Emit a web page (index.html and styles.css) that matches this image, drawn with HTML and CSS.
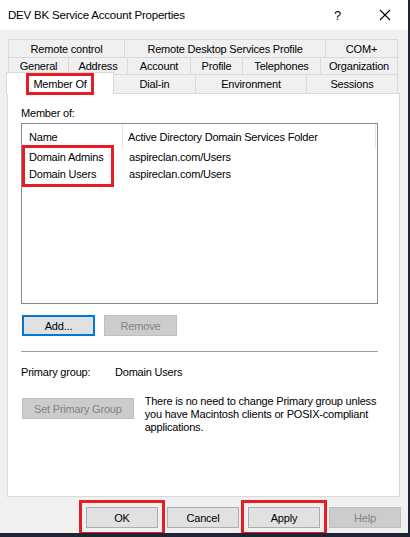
FILE: index.html
```html
<!DOCTYPE html>
<html lang="en">
<head>
  <meta charset="UTF-8">
  <title>DEV BK Service Account Properties</title>
  <link rel="stylesheet" href="styles.css">
</head>
<body>
  <div class="window">
    <div class="titlebar">
      <span class="title">DEV BK Service Account Properties</span>
      <span class="help-btn">?</span>
      <span class="close-btn">
        <svg width="12" height="12" viewBox="0 0 12 12">
          <path d="M1 1 L11 11 M11 1 L1 11" stroke="#000" stroke-width="1.1" fill="none"/>
        </svg>
      </span>
    </div>

    <div class="tabs">
      <div class="tab-row">
        <div class="tab" style="width:116px">Remote control</div>
        <div class="tab" style="width:201px">Remote Desktop Services Profile</div>
        <div class="tab last" style="width:73px">COM+</div>
      </div>
      <div class="tab-row">
        <div class="tab" style="width:60px">General</div>
        <div class="tab" style="width:59px">Address</div>
        <div class="tab" style="width:63px">Account</div>
        <div class="tab" style="width:52px">Profile</div>
        <div class="tab" style="width:78px">Telephones</div>
        <div class="tab last" style="width:78px">Organization</div>
      </div>
      <div class="tab-row front">
        <div class="tab active" style="width:108px"><span class="mark">Member Of</span></div>
        <div class="tab" style="width:81px">Dial-in</div>
        <div class="tab" style="width:111px">Environment</div>
        <div class="tab last" style="width:92px">Sessions</div>
      </div>
    </div>

    <div class="panel">
      <div class="label">Member of:</div>
      <div class="listview">
        <div class="lv-header">
          <div class="lv-col name-col">Name</div>
          <div class="lv-col folder-col">Active Directory Domain Services Folder</div>
        </div>
        <div class="lv-body">
          <div class="names">
            <div class="mark-box">
              <div class="lv-cell">Domain Admins</div>
              <div class="lv-cell">Domain Users</div>
            </div>
          </div>
          <div class="folders">
            <div class="lv-cell">aspireclan.com/Users</div>
            <div class="lv-cell">aspireclan.com/Users</div>
          </div>
        </div>
      </div>

      <div class="btn-row">
        <button class="btn focused">Add...</button>
        <button class="btn" disabled>Remove</button>
      </div>

      <div class="separator"></div>

      <div class="primary-row">
        <span class="primary-label">Primary group:</span>
        <span>Domain Users</span>
      </div>

      <div class="set-row">
        <button class="btn wide" disabled>Set Primary Group</button>
        <p class="note">There is no need to change Primary group unless you have Macintosh clients or POSIX-compliant applications.</p>
      </div>
    </div>

    <div class="dialog-buttons">
      <button class="btn dlg marked">OK</button>
      <button class="btn dlg">Cancel</button>
      <button class="btn dlg marked">Apply</button>
      <button class="btn dlg" disabled>Help</button>
    </div>
  </div>
</body>
</html>
```

FILE: styles.css
```css
body {
  margin: 0;
  background: #1f2533;
  font-family: "Liberation Sans", Arial, sans-serif;
  font-size: 11px;
  letter-spacing: -0.2px;
  color: #000;
}

.window {
  width: 408px;
  height: 533px;
  background: #f0f0f0;
  overflow: hidden;
}

/* title bar */
.titlebar {
  height: 30px;
  background: #fff;
  display: flex;
  align-items: center;
  padding-left: 8px;
}

.title {
  flex: 1;
  font-size: 11.5px;
}

.help-btn {
  width: 12px;
  font-size: 13px;
  margin-right: 33px;
}

.close-btn {
  display: flex;
  margin-right: 17px;
}

/* property sheet tabs */
.tabs {
  padding: 9px 10px 0 8px;
}

.tab-row {
  display: flex;
  height: 18px;
}

.tab-row + .tab-row {
  height: 17px;
}

.tab-row.front {
  height: 19px;
  margin-left: -2px;
  align-items: flex-end;
}

.tab {
  box-sizing: border-box;
  height: 100%;
  border-top: 1px solid #d9d9d9;
  border-left: 1px solid #d9d9d9;
  background: #f0f0f0;
  display: flex;
  align-items: center;
  justify-content: center;
  white-space: nowrap;
}

.tab.last {
  border-right: 1px solid #d9d9d9;
}

.tab.active {
  height: 22px;
  margin-bottom: -1px;
  background: #fff;
  border-right: 1px solid #d9d9d9;
  position: relative;
  z-index: 1;
}

.tab.active + .tab {
  border-left: none;
}

.mark {
  outline: 3px solid #e81c24;
  outline-offset: 1px;
  padding: 0 3px;
  line-height: 14px;
}

/* page body */
.panel {
  box-sizing: border-box;
  height: 404px;
  margin: 0 8px 0 7px;
  background: #fff;
  border: 1px solid #d9d9d9;
  padding: 12px 21px 0 13px;
}

.label {
  line-height: 14px;
}

.listview {
  box-sizing: border-box;
  height: 181px;
  margin-top: 3px;
  border: 1px solid #828790;
}

.lv-header {
  display: flex;
  height: 25px;
}

.lv-col {
  box-sizing: border-box;
  display: flex;
  align-items: center;
  border-right: 1px solid #e5e5e5;
  white-space: nowrap;
}

.name-col {
  width: 101px;
  padding-left: 7px;
}

.folder-col {
  width: 253px;
  padding-left: 5px;
}

.lv-body {
  display: flex;
}

.names {
  width: 101px;
}

.mark-box {
  width: 81px;
  margin-left: 4px;
  padding: 0 0 0 3px;
  outline: 3px solid #e81c24;
  outline-offset: 1px;
}

.folders {
  padding-left: 6px;
}

.lv-cell {
  line-height: 17px;
  white-space: nowrap;
}

/* buttons */
.btn {
  box-sizing: border-box;
  height: 21px;
  width: 73px;
  padding: 0;
  font-family: inherit;
  font-size: 11px;
  letter-spacing: inherit;
  color: #000;
  background: #e1e1e1;
  border: 1px solid #adadad;
}

.btn.focused {
  border: 2px solid #0078d7;
}

.btn:disabled {
  background: #cccccc;
  border-color: #bfbfbf;
  color: #838383;
}

.btn-row {
  display: flex;
  gap: 9px;
  margin: 11px 0 0 1px;
}

.separator {
  height: 1px;
  background: #a0a0a0;
  margin-top: 15px;
}

.primary-row {
  display: flex;
  margin-top: 13px;
  line-height: 14px;
}

.primary-label {
  width: 94px;
}

.set-row {
  display: flex;
  align-items: flex-start;
  gap: 11px;
  margin: 16px 0 0 1px;
}

.btn.wide {
  width: 112px;
  margin-top: 3px;
}

.note {
  margin: 0;
  width: 234px;
  line-height: 13px;
}

/* OK / Cancel / Apply / Help */
.dialog-buttons {
  display: flex;
  justify-content: flex-end;
  gap: 9px;
  margin-top: 10px;
  padding-right: 7px;
}

.btn.dlg {
  width: 72px;
}

.btn.marked {
  outline: 3px solid #e81c24;
  outline-offset: 4px;
}
```
